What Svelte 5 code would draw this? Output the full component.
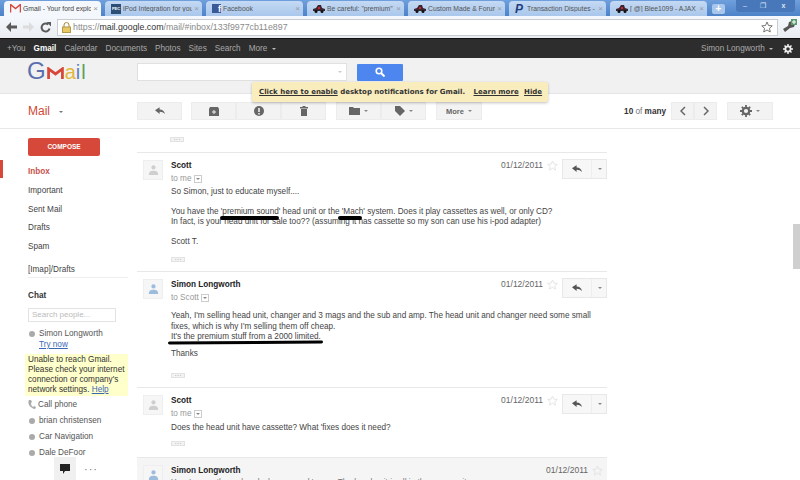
<script>
  const tabs = [
    { title: 'Gmail - Your ford explor', icon: 'gmail', active: true },
    { title: 'iPod Integration for you', icon: 'pec' },
    { title: 'Facebook', icon: 'fb' },
    { title: 'Be careful: "premium" o', icon: 'car' },
    { title: 'Custom Made & Forum In', icon: 'car' },
    { title: 'Transaction Disputes - C', icon: 'pp' },
    { title: '[ @] Blee1099 - AJAX C', icon: 'car' }
  ];
  const navLinks = ['Calendar', 'Documents', 'Photos', 'Sites', 'Search'];
  const folders = ['Important', 'Sent Mail', 'Drafts', 'Spam'];
  const contacts = ['brian christensen', 'Car Navigation', 'Dale DeFoor'];
</script>

{#snippet gear(color, size)}
  <svg width={size} height={size} viewBox="0 0 12 12"><circle cx="6" cy="6" r="3.200" fill="none" stroke={color} stroke-width="2.200" /><path d="M6 0v2.500M6 9.500V12M0 6h2.500M9.500 6H12M1.800 1.800l1.800 1.800M8.400 8.400l1.800 1.800M1.800 10.200l1.800-1.800M8.400 3.600l1.800-1.800" stroke={color} stroke-width="1.800" /></svg>
{/snippet}

{#snippet reply()}
  <div class="reply-btn">
    <span class="reply-main">
      <svg width="10" height="8" viewBox="0 0 13 10"><path d="M6 0v3c4 0 6 2 7 6-2-2-4-3-7-3v3L0 4z" fill="#555" /></svg>
    </span>
    <span class="reply-more"><i class="caret dark"></i></span>
  </div>
{/snippet}

{#snippet star()}
  <svg class="star" width="11" height="11" viewBox="0 0 24 24"><path d="M12 2l3 7 7.500.700-5.600 5 1.700 7.300L12 18l-6.600 4 1.700-7.300-5.600-5L9 9z" fill="none" stroke="#e2e2e2" stroke-width="2" /></svg>
{/snippet}

{#snippet avatar(blue)}
  <div class="avatar">
    <svg width="11" height="12" viewBox="0 0 13 14">
      <circle cx="6.500" cy="4" r="2.500" fill={blue ? '#9dbbdc' : '#cfcfcf'} />
      <path d="M1 13c0-4 2-5 5.500-5s5.500 1 5.500 5z" fill={blue ? '#9dbbdc' : '#cfcfcf'} />
    </svg>
  </div>
{/snippet}

{#snippet dots()}
  <div class="dots">···</div>
{/snippet}

{#snippet tobox()}
  <i class="tobox"><i class="caret dark"></i></i>
{/snippet}

<div class="screen">
  <div class="tabstrip">
    {#each tabs as tab}
      <div class="tab" class:active={tab.active}>
        {#if tab.icon === 'gmail'}
          <svg class="fav" width="11" height="9" viewBox="0 0 11 9"><path d="M.500 8.500v-8l5 4 5-4v8" fill="none" stroke="#d6473c" stroke-width="1.500" /></svg>
        {:else if tab.icon === 'pec'}
          <span class="fav pec">PEC</span>
        {:else if tab.icon === 'fb'}
          <span class="fav fb">f</span>
        {:else if tab.icon === 'car'}
          <svg class="fav" width="12" height="8" viewBox="0 0 12 8"><path d="M0 4l3-1 2-3h3l1 3 3 1v2H0z" fill="#3a2630" /><circle cx="3" cy="6.500" r="1.500" fill="#111" /><circle cx="9" cy="6.500" r="1.500" fill="#111" /><rect x="5" y="2" width="2" height="2" fill="#c23" /></svg>
        {:else}
          <span class="fav pp">P</span>
        {/if}
        <span class="tab-title">{tab.title}</span>
        <span class="tab-x">×</span>
      </div>
    {/each}
    <div class="newtab">+</div>
    <div class="winctl">
      <span>–</span><span class="mid">❐</span><span class="close">x</span>
    </div>
  </div>

  <div class="omnibar">
    <div class="navbtns">
      <svg width="11" height="10" viewBox="0 0 11 10"><path d="M5 0L0 5l5 5V6.500h6v-3H5z" fill="#5a5a5a" /></svg>
      <svg width="11" height="10" viewBox="0 0 11 10"><path d="M6 0l5 5-5 5V6.500H0v-3h6z" fill="#dcdcdc" /></svg>
      <svg width="11" height="11" viewBox="0 0 11 11"><path d="M9.500 6.500A4 4 0 1 1 8.300 2.500" fill="none" stroke="#5a5a5a" stroke-width="2" /><path d="M6.500 0h4.500v4.500z" fill="#5a5a5a" /></svg>
    </div>
    <div class="url">
      <svg class="lock" width="9" height="11" viewBox="0 0 9 11"><path d="M2 5V3a2.500 2.500 0 0 1 5 0v2" fill="none" stroke="#a08a40" /><rect x=".5" y="5" width="8" height="5.500" fill="#e8c860" stroke="#b09a50" /></svg>
      <span class="u-gray">https://</span><span class="u-dark">mail.google.com</span><span class="u-gray">/mail/#inbox/133f9977cb11e897</span>
      <svg class="urlstar" width="12" height="12" viewBox="0 0 24 24"><path d="M12 2l3 7 7.500.700-5.600 5 1.700 7.300L12 18l-6.600 4 1.700-7.300-5.600-5L9 9z" fill="none" stroke="#777" stroke-width="2" /></svg>
    </div>
    <div class="wrench">
      <svg width="15" height="14" viewBox="0 0 15 14"><path d="M1 10l5-3 1-4 3-1-1 3 2 1 2-1-1 3-4 1-5 4z" fill="#555" /><rect x="9" y="0" width="6" height="6" fill="#5a9a6a" /><path d="M12 1v4M10 3h4" stroke="#fff" /></svg>
    </div>
  </div>

  <div class="gbar">
    <span class="g-link">+You</span>
    <span class="g-link current">Gmail</span>
    {#each navLinks as link}
      <span class="g-link">{link}</span>
    {/each}
    <span class="g-link">More <i class="caret light"></i></span>
    <span class="g-user">Simon Longworth <i class="caret light"></i></span>
    <span class="g-gear">{@render gear('#eee', 10)}</span>
  </div>

  <header class="masthead">
    <div class="logo">
      <span class="lg-g">G</span><svg class="lg-m" width="17" height="12" viewBox="0 0 18 13"><path d="M1.500 13V2L9 7.500 16.500 2v11" fill="none" stroke="#d8483a" stroke-width="3" /></svg><span class="lg-a">a</span><span class="lg-i">i</span><span class="lg-l">l</span>
    </div>
    <div class="search">
      <i class="caret pale"></i>
    </div>
    <div class="searchbtn">
      <svg width="10" height="10" viewBox="0 0 10 10"><circle cx="4" cy="4" r="2.800" fill="none" stroke="#fff" stroke-width="1.600" /><path d="M6 6l3.500 3.500" stroke="#fff" stroke-width="2" /></svg>
    </div>
  </header>

  <div class="actions">
    <div class="mail-label">Mail <i class="caret dark"></i></div>
    <div class="btn w45">
      <svg width="10" height="8" viewBox="0 0 13 10"><path d="M6 0v3c4 0 6 2 7 6-2-2-4-3-7-3v3L0 4z" fill="#666" /></svg>
    </div>
    <div class="group g1">
      <div class="btn w45">
        <svg width="10" height="9" viewBox="0 0 10 9"><path d="M0 2l1-2h8l1 2v7H0z" fill="#666" /><path d="M5 3v4M3 5h4" stroke="#eee" /></svg>
      </div>
      <div class="btn w45">
        <svg width="10" height="10" viewBox="0 0 10 10"><circle cx="5" cy="5" r="5" fill="#666" /><rect x="4.200" y="2" width="1.600" height="4" fill="#eee" /><rect x="4.200" y="7" width="1.600" height="1.500" fill="#eee" /></svg>
      </div>
      <div class="btn w45">
        <svg width="8" height="10" viewBox="0 0 8 10"><rect y="1" width="8" height="1.500" fill="#666" /><rect x="2.500" width="3" height="1" fill="#666" /><rect x="1" y="3" width="6" height="7" fill="#666" /></svg>
      </div>
    </div>
    <div class="group g2">
      <div class="btn w45">
        <svg width="11" height="8" viewBox="0 0 11 8"><path d="M0 0h4l1 1h6v7H0z" fill="#666" /></svg>
        <i class="caret dark"></i>
      </div>
      <div class="btn w45">
        <svg width="10" height="10" viewBox="0 0 10 10"><path d="M0 0h5l5 5-5 5-5-5z" fill="#666" /></svg>
        <i class="caret dark"></i>
      </div>
    </div>
    <div class="btn more">More <i class="caret dark"></i></div>
    <div class="pager"><b>10</b> of <b>many</b></div>
    <div class="group">
      <div class="btn w22">
        <svg width="6" height="10" viewBox="0 0 6 10"><path d="M5 1L1 5l4 4" fill="none" stroke="#666" stroke-width="1.500" /></svg>
      </div>
      <div class="btn w22">
        <svg width="6" height="10" viewBox="0 0 6 10"><path d="M1 1l4 4-4 4" fill="none" stroke="#666" stroke-width="1.500" /></svg>
      </div>
    </div>
    <div class="btn settings">
      {@render gear('#666', 12)}
      <i class="caret dark"></i>
    </div>
  </div>

  <div class="notice">
    <span class="n-link">Click here to enable</span> desktop notifications for Gmail.
    <span class="n-link gap1">Learn more</span>
    <span class="n-link gap2">Hide</span>
  </div>

  <div class="content">
    <nav class="sidebar">
      <div class="compose">COMPOSE</div>
      <div class="folder inbox">Inbox</div>
      {#each folders as f}
        <div class="folder">{f}</div>
      {/each}
      <div class="imap">[Imap]/Drafts</div>
      <div class="chat-title">Chat</div>
      <div class="people">Search people...</div>
      <div class="contact first"><i class="dot"></i>Simon Longworth</div>
      <div class="trynow">Try now</div>
      <div class="unable">Unable to reach Gmail.<br />Please check your internet<br />connection or company's<br />network settings. <u>Help</u></div>
      <div class="contact phone">
        <svg width="8" height="9" viewBox="0 0 8 9"><path d="M1 0c-2 3 1 8 6 9l1-2-2-1-1 1C3.500 6 3 4.500 3 3l1-1-1-2z" fill="#aaa" /></svg>
        Call phone
      </div>
      {#each contacts as c}
        <div class="contact"><i class="dot"></i>{c}</div>
      {/each}
      <div class="chatbar">
        <span class="bubble">
          <svg width="10" height="10" viewBox="0 0 10 10"><path d="M0 0h10v7H5L3 10V7H0z" fill="#222" /></svg>
        </span>
        <span class="chatdots">···</span>
      </div>
    </nav>

    <main class="thread">
      <div class="top-stub">{@render dots()}</div>

      <article class="msg m1">
        {@render avatar(false)}
        <div class="msg-main">
          <div class="msg-head">
            <div><div class="from">Scott</div><div class="to">to me {@render tobox()}</div></div>
            <div class="meta"><span class="date">01/12/2011</span>{@render star()}{@render reply()}</div>
          </div>
          <div class="body">
            <p>So Simon, just to educate myself....</p>
            <p class="mark-wrap">You have the 'premium sound' head unit or the 'Mach' system. Does it play cassettes as well, or only CD?<br />In fact, is your head unit for sale too?? (assuming it has cassette so my son can use his i-pod adapter)
              <i class="scribble s1"></i><i class="scribble s2"></i>
            </p>
            <p>Scott T.</p>
          </div>
          {@render dots()}
        </div>
      </article>

      <article class="msg m2">
        {@render avatar(true)}
        <div class="msg-main">
          <div class="msg-head">
            <div><div class="from">Simon Longworth</div><div class="to">to Scott {@render tobox()}</div></div>
            <div class="meta"><span class="date">01/12/2011</span>{@render star()}{@render reply()}</div>
          </div>
          <div class="body b2">
            <p class="mark-wrap">Yeah, I'm selling head unit, changer and 3 mags and the sub and amp. The head unit and changer need some small<br />fixes, which is why I'm selling them off cheap.<br />It's the premium stuff from a 2000 limited.
              <i class="scribble s3"></i>
            </p>
            <p>Thanks</p>
          </div>
          <div class="dots-gap">{@render dots()}</div>
        </div>
      </article>

      <article class="msg m3">
        {@render avatar(false)}
        <div class="msg-main">
          <div class="msg-head">
            <div><div class="from">Scott</div><div class="to">to me {@render tobox()}</div></div>
            <div class="meta"><span class="date">01/12/2011</span>{@render star()}{@render reply()}</div>
          </div>
          <div class="body b3">
            <p>Does the head unit have cassette? What 'fixes does it need?</p>
          </div>
          {@render dots()}
        </div>
      </article>

      <article class="msg m4">
        {@render avatar(true)}
        <div class="msg-main">
          <div class="msg-head collapsed">
            <div class="from">Simon Longworth</div>
            <div class="meta"><span class="date">01/12/2011</span>{@render star()}</div>
          </div>
          <div class="snippet">Yes, I currently run head, changer and 'mags. The head unit is all in the same unit.</div>
        </div>
      </article>
    </main>

    <div class="scroll-thumb"></div>
  </div>
</div>

<style>
  :global(body) {
    margin: 0;
    background: #fff;
  }

  .screen {
    position: relative;
    width: 800px;
    height: 480px;
    overflow: hidden;
    display: flex;
    flex-direction: column;
    font-family: "Liberation Sans", Arial, sans-serif;
    font-size: 8.200px;
    color: #333;
    background: #fff;
  }

  /* browser chrome */
  .tabstrip {
    height: 16px;
    flex: none;
    display: flex;
    align-items: flex-end;
    padding-left: 4px;
    background: linear-gradient(#6f9fdc, #4e83c9);
  }

  .tab {
    width: 97px;
    height: 15px;
    margin-right: 4px;
    padding: 0 3px 0 6px;
    box-sizing: border-box;
    display: flex;
    align-items: center;
    gap: 2px;
    border-radius: 4px 4px 0 0;
    background: linear-gradient(#c4d9f3, #a9c7ec);
    color: #555;
    font-size: 6.800px;
    overflow: hidden;
  }

  .tab.active {
    background: #f4f7fc;
    color: #444;
  }

  .tab-title {
    flex: 1;
    white-space: nowrap;
    overflow: hidden;
  }

  .tab-x {
    color: #999;
    font-size: 8px;
  }

  .fav {
    flex: none;
  }

  .pec {
    width: 10px;
    height: 10px;
    background: #2c4f78;
    color: #fff;
    font-size: 4px;
    font-weight: bold;
    line-height: 10px;
    text-align: center;
  }

  .fb {
    width: 9px;
    height: 9px;
    background: #3b5998;
    color: #fff;
    font-size: 9px;
    font-weight: bold;
    line-height: 10px;
    text-align: right;
  }

  .pp {
    width: 10px;
    color: #1f3f80;
    font-size: 12px;
    font-weight: bold;
    font-style: italic;
    line-height: 10px;
  }

  .newtab {
    width: 13px;
    height: 10px;
    margin: 0 0 2px 1px;
    border-radius: 2px;
    background: #a9c7ec;
    color: #fff;
    font-size: 10px;
    font-weight: bold;
    line-height: 10px;
    text-align: center;
  }

  .winctl {
    margin-left: auto;
    margin-right: 5px;
    height: 12px;
    align-self: flex-start;
    display: flex;
    border-radius: 0 0 3px 3px;
    background: #4878ba;
    color: #dce8f6;
    font-size: 7px;
    line-height: 11px;
    text-align: center;
  }

  .winctl span {
    width: 18px;
  }

  .winctl .close {
    width: 23px;
    font-weight: bold;
  }

  .omnibar {
    height: 22px;
    flex: none;
    display: flex;
    align-items: center;
    background: linear-gradient(#f5f8fc, #e9edf2);
  }

  .navbtns {
    width: 57px;
    flex: none;
    padding-left: 6px;
    box-sizing: border-box;
    display: flex;
    align-items: center;
    gap: 6px;
  }

  .url {
    flex: 1;
    height: 17px;
    display: flex;
    align-items: center;
    box-sizing: border-box;
    padding-left: 4px;
    border: 1px solid #c9ccd1;
    background: #fff;
    font-size: 8.800px;
  }

  .lock {
    margin-right: 2px;
  }

  .u-gray {
    color: #8a8a8a;
  }

  .u-dark {
    color: #333;
  }

  .urlstar {
    margin-left: auto;
    margin-right: 4px;
  }

  .wrench {
    width: 22px;
    flex: none;
    padding-left: 4px;
    box-sizing: border-box;
  }

  /* google bar */
  .gbar {
    height: 19px;
    flex: none;
    display: flex;
    align-items: center;
    gap: 8px;
    padding: 0 7px;
    border-top: 1px solid #111;
    background: #2d2d2d;
    color: #aaa;
    font-size: 8.200px;
  }

  .g-link.current {
    color: #fff;
    font-weight: bold;
    box-shadow: 0 -9px 0 -8px #c64a3c;
  }

  .g-user {
    margin-left: auto;
    margin-right: 2px;
  }

  .g-gear {
    display: flex;
  }

  .caret {
    display: inline-block;
    width: 0;
    height: 0;
    margin-left: 2px;
    vertical-align: middle;
    border-left: 2px solid transparent;
    border-right: 2px solid transparent;
    border-top: 2px solid #888;
  }

  .caret.light {
    border-top-color: #bbb;
  }

  .caret.pale {
    border-top-color: #ccc;
  }

  /* masthead */
  .masthead {
    height: 35px;
    flex: none;
    display: flex;
    align-items: center;
    background: #f1f1f1;
    border-bottom: 1px solid #e5e5e5;
  }

  .logo {
    width: 137px;
    flex: none;
    padding-left: 27px;
    box-sizing: border-box;
    display: flex;
    align-items: baseline;
    font-family: "Liberation Sans", sans-serif;
    font-size: 20px;
    line-height: 28px;
    margin-top: -8px;
  }

  .lg-g {
    color: #5b6fae;
    font-size: 24px;
  }

  .lg-m {
    margin: 0 1px;
  }

  .lg-a {
    color: #e2b83c;
  }

  .lg-i {
    color: #5b80c4;
  }

  .lg-l {
    color: #5da05f;
    margin-left: 1px;
  }

  .search {
    width: 210px;
    height: 18px;
    box-sizing: border-box;
    display: flex;
    align-items: center;
    justify-content: flex-end;
    padding-right: 4px;
    margin-top: -7px;
    background: #fff;
    border: 1px solid #e0e0e0;
  }

  .searchbtn {
    width: 46px;
    height: 17px;
    margin: -7px 0 0 10px;
    display: flex;
    align-items: center;
    justify-content: center;
    border-radius: 1px;
    background: #4c86ee;
  }

  /* action row */
  .actions {
    height: 35px;
    flex: none;
    display: flex;
    align-items: center;
    padding-right: 27px;
    box-sizing: border-box;
    border-bottom: 1px solid #e8e8e8;
    background: #fff;
  }

  .mail-label {
    width: 137px;
    flex: none;
    padding-left: 28px;
    box-sizing: border-box;
    color: #d14836;
    font-size: 12px;
  }

  .mail-label .caret {
    margin-left: 6px;
    border-top-color: #777;
  }

  .btn {
    height: 18px;
    display: flex;
    align-items: center;
    justify-content: center;
    gap: 3px;
    box-sizing: border-box;
    border: 1px solid #ececec;
    background: #f3f3f3;
  }

  .btn .caret {
    margin-left: 1px;
  }

  .w45 {
    width: 45px;
  }

  .w22 {
    width: 23px;
  }

  .group {
    display: flex;
  }

  .g1 {
    margin-left: 9px;
  }

  .g2 {
    margin-left: 10px;
  }

  .more {
    width: 46px;
    margin-left: 10px;
    color: #666;
    font-size: 7.500px;
    font-weight: bold;
  }

  .pager {
    margin-left: auto;
    margin-right: 5px;
    color: #777;
    font-size: 8.200px;
  }

  .pager b {
    color: #333;
  }

  .settings {
    width: 46px;
    margin-left: 10px;
  }

  /* notification */
  .notice {
    position: absolute;
    top: 82px;
    left: 252px;
    width: 296px;
    height: 20px;
    box-sizing: border-box;
    padding: 6px 0 0 7px;
    border-radius: 2px;
    background: #f9edbe;
    box-shadow: 0 1px 3px rgba(0, 0, 0, 0.25);
    color: #333;
    font-family: "DejaVu Sans", sans-serif;
    font-size: 7px;
    font-weight: bold;
    white-space: nowrap;
  }

  .n-link {
    text-decoration: underline;
  }

  .gap1 {
    margin-left: 6px;
  }

  .gap2 {
    margin-left: 3px;
  }

  /* sidebar */
  .content {
    position: relative;
    flex: 1;
    display: flex;
    min-height: 0;
  }

  .sidebar {
    position: relative;
    width: 137px;
    flex: none;
    padding-left: 28px;
    box-sizing: border-box;
    color: #444;
  }

  .compose {
    width: 72px;
    height: 18px;
    margin-top: 9px;
    margin-bottom: 7px;
    border-radius: 2px;
    background: #d6483a;
    color: #fff;
    font-size: 6.500px;
    font-weight: bold;
    line-height: 18px;
    text-align: center;
  }

  .folder {
    height: 18.800px;
    line-height: 18.800px;
  }

  .inbox {
    color: #c9504e;
    font-weight: bold;
  }

  .inbox::before {
    content: '';
    position: absolute;
    left: 0;
    top: 31px;
    width: 3px;
    height: 18px;
    background: #d6483a;
  }

  .imap {
    width: 100px;
    margin-top: 8px;
    padding-bottom: 3px;
    border-bottom: 1px solid #eee;
  }

  .chat-title {
    margin-top: 13px;
    color: #333;
    font-weight: bold;
  }

  .people {
    width: 88px;
    height: 14px;
    margin-top: 8px;
    box-sizing: border-box;
    border: 1px solid #e3e3e3;
    color: #bbb;
    font-size: 8px;
    line-height: 12px;
    padding-left: 3px;
  }

  .contact {
    height: 16px;
    display: flex;
    align-items: center;
    white-space: nowrap;
    color: #555;
  }

  .contact.first {
    margin-top: 6px;
    height: 12px;
  }

  .contact.phone {
    gap: 2px;
  }

  .dot {
    width: 6px;
    height: 6px;
    margin: 0 4px 0 1px;
    border-radius: 50%;
    background: #aaa;
  }

  .trynow {
    padding-left: 11px;
    color: #3b68b5;
    text-decoration: underline;
    line-height: 9px;
  }

  .unable {
    width: 100px;
    margin: 5px 0 1px -3px;
    padding: 1px 0 1px 3px;
    background: #ffffcc;
    color: #333;
    line-height: 10px;
  }

  .unable u {
    color: #3b68b5;
  }

  .chatbar {
    position: absolute;
    left: 54px;
    bottom: 0;
    height: 23px;
    display: flex;
    align-items: center;
    background: #fff;
  }

  .bubble {
    width: 22px;
    height: 23px;
    display: flex;
    align-items: center;
    justify-content: center;
    background: #f0f0f0;
  }

  .chatdots {
    margin-left: 8px;
    color: #777;
    font-size: 11px;
    letter-spacing: 1px;
  }

  /* thread */
  .thread {
    width: 470px;
    flex: none;
    min-width: 0;
  }

  .top-stub {
    height: 23px;
    padding: 8px 0 0 33px;
    box-sizing: border-box;
  }

  .dots {
    width: 14px;
    height: 5px;
    box-sizing: border-box;
    border: 1px solid #e2e2e2;
    background: #f3f3f3;
    color: #999;
    font-size: 7px;
    line-height: 3px;
    text-align: center;
    overflow: hidden;
  }

  .msg {
    display: flex;
    gap: 8px;
    padding: 7px 0 0 6px;
    box-sizing: border-box;
    border-top: 1px solid #e8e8e8;
  }

  .m1 {
    height: 119px;
  }

  .m2 {
    height: 116px;
  }

  .m3 {
    height: 70px;
  }

  .m4 {
    background: #f5f5f5;
    width: 470px;
  }

  .avatar {
    width: 20px;
    height: 20px;
    flex: none;
    display: flex;
    align-items: center;
    justify-content: center;
    box-sizing: border-box;
    border: 1px solid #eee;
    background: #f6f6f6;
  }

  .msg-main {
    flex: 1;
    min-width: 0;
  }

  .msg-head {
    height: 28px;
    display: flex;
    justify-content: space-between;
    align-items: flex-start;
  }

  .msg-head.collapsed {
    height: 12px;
  }

  .from {
    color: #222;
    font-weight: bold;
    line-height: 11px;
  }

  .to {
    margin-top: 2px;
    color: #999;
    line-height: 11px;
  }

  .tobox {
    display: inline-flex;
    align-items: center;
    justify-content: center;
    width: 6px;
    height: 6px;
    border: 1px solid #ccc;
    vertical-align: middle;
  }

  .tobox .caret {
    margin: 0;
  }

  .meta {
    display: flex;
    align-items: flex-start;
    color: #666;
  }

  .date {
    line-height: 11px;
    font-size: 8.500px;
  }

  .star {
    margin-left: 4px;
    margin-right: 4px;
  }

  .reply-btn {
    display: flex;
    width: 45px;
    height: 20px;
    box-sizing: border-box;
    margin-top: -1px;
    border: 1px solid #e8e8e8;
    background: #f7f7f7;
  }

  .reply-main {
    flex: 1;
    display: flex;
    align-items: center;
    justify-content: center;
    border-right: 1px solid #eee;
  }

  .reply-more {
    width: 14px;
    display: flex;
    align-items: center;
    justify-content: center;
  }

  .body {
    color: #444;
    line-height: 10px;
    margin-top: -1px;
  }

  .body p {
    margin: 0 0 10px;
  }

  .b2 {
    margin-top: 4px;
    line-height: 10.500px;
  }

  .b2 p {
    margin-bottom: 6.500px;
  }

  .b3 {
    margin-top: 0;
  }

  .b3 p {
    margin-bottom: 7.500px;
  }

  .dots-gap {
    margin-top: 13px;
  }

  .mark-wrap {
    position: relative;
  }

  .scribble {
    position: absolute;
    height: 3px;
    border-radius: 2px;
    background: #000;
  }

  .s1 {
    left: 49px;
    top: 9px;
    width: 59px;
    height: 4px;
  }

  .s2 {
    left: 167px;
    top: 9px;
    width: 24px;
    height: 4px;
  }

  .s3 {
    left: -3px;
    top: 30px;
    width: 155px;
    transform: rotate(-0.3deg);
  }

  .snippet {
    color: #777;
    line-height: 11px;
    white-space: nowrap;
  }

  .scroll-thumb {
    position: absolute;
    right: 0;
    top: 95px;
    width: 7px;
    height: 45px;
    background: #cfcfcf;
  }
</style>
